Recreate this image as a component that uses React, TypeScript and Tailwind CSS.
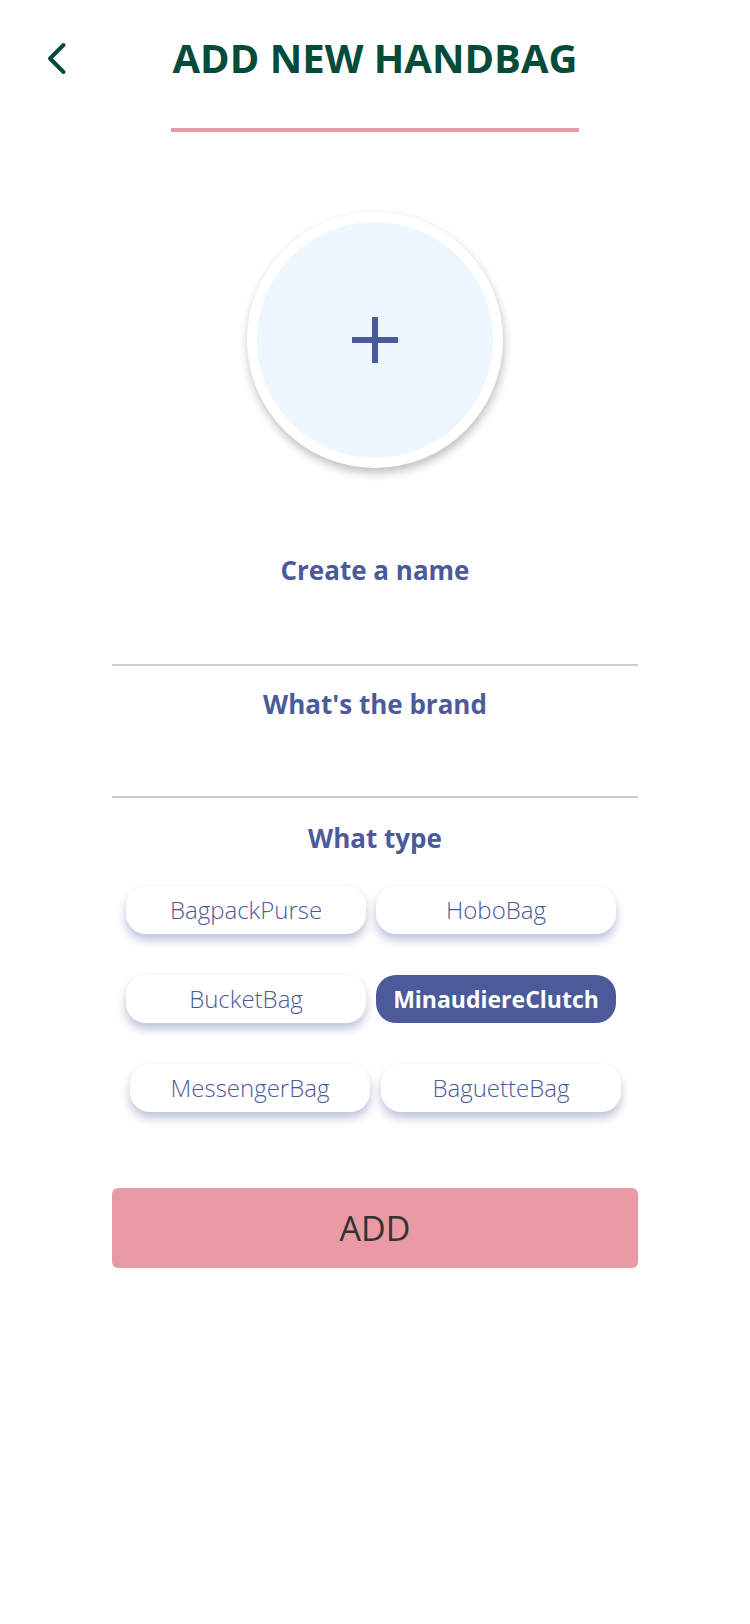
import React from "react";

const types: { label: string; selected?: boolean }[][] = [
  [{ label: "BagpackPurse" }, { label: "HoboBag" }],
  [{ label: "BucketBag" }, { label: "MinaudiereClutch", selected: true }],
  [{ label: "MessengerBag" }, { label: "BaguetteBag" }],
];

function Chip({ label, selected }: { label: string; selected?: boolean }) {
  return (
    <div
      className={
        selected
          ? "w-[240px] h-[48px] rounded-[20px] bg-[#4b5a9a] flex items-center justify-center text-white text-[23px] font-bold"
          : "w-[240px] h-[48px] rounded-[20px] bg-white flex items-center justify-center text-[#4b5a9a] text-[24px] font-light shadow-[0_6px_10px_rgba(74,88,153,0.36)]"
      }
    >
      {label}
    </div>
  );
}

function Section({ title, inputH }: { title: string; inputH: string }) {
  return (
    <div className="w-[526px] flex flex-col">
      <div className="text-center text-[26px] leading-[36px] font-bold text-[#4b5a9a]">{title}</div>
      <div className={`${inputH} border-b-2 border-[#cccccc]`} />
    </div>
  );
}

export default function App() {
  return (
    <div className="w-[750px] min-h-[1624px] bg-white font-['Open_Sans',sans-serif] flex flex-col">
      {/* Header */}
      <div className="grid grid-cols-[1fr_auto_1fr] pt-[30px]">
        <div className="pl-[46px] pt-[12px]">
          <svg width="21" height="33" viewBox="0 0 21 33" fill="none">
            <polyline
              points="17.5,3 4,16.5 17.5,30"
              stroke="#054b3b"
              strokeWidth="4"
              strokeLinecap="round"
              strokeLinejoin="round"
            />
          </svg>
        </div>
        <div className="text-[40px] leading-[56px] font-bold text-[#054b3b] pb-[42px] border-b-4 border-[#e89ba4] px-[2px]">
          ADD NEW HANDBAG
        </div>
        <div />
      </div>

      {/* Photo circle */}
      <div className="flex justify-center mt-[80px]">
        <div className="w-[256px] h-[256px] rounded-full bg-white p-[10px] shadow-[1px_5px_10px_rgba(0,0,0,0.25)]">
          <div className="w-full h-full rounded-full bg-[#eef6fe] flex items-center justify-center">
            <svg width="46" height="46" viewBox="0 0 46 46">
              <rect x="20" y="0" width="6" height="46" fill="#4b5a9a" />
              <rect x="0" y="20" width="46" height="6" fill="#4b5a9a" />
            </svg>
          </div>
        </div>
      </div>

      {/* Form */}
      <div className="flex flex-col items-center mt-[84px]">
        <Section title="Create a name" inputH="h-[78px]" />
        <div className="mt-[20px]">
          <Section title="What's the brand" inputH="h-[76px]" />
        </div>
        <div className="mt-[22px] text-center text-[26px] leading-[36px] font-bold text-[#4b5a9a]">What type</div>
      </div>

      {/* Chips */}
      <div className="ml-[126px] mt-[30px] flex flex-col gap-[41px]">
        <div className="flex gap-[10px]">
          {types[0].map((t) => (
            <Chip key={t.label} {...t} />
          ))}
        </div>
        <div className="flex gap-[10px]">
          {types[1].map((t) => (
            <Chip key={t.label} {...t} />
          ))}
        </div>
        <div className="flex gap-[11px] pl-[4px]">
          {types[2].map((t) => (
            <Chip key={t.label} {...t} />
          ))}
        </div>
      </div>

      {/* Add button */}
      <div className="flex justify-center mt-[76px]">
        <button className="w-[526px] h-[80px] rounded-[6px] bg-[#e89ba5] text-[#333333] text-[34px] font-normal flex items-center justify-center">
          ADD
        </button>
      </div>
    </div>
  );
}
